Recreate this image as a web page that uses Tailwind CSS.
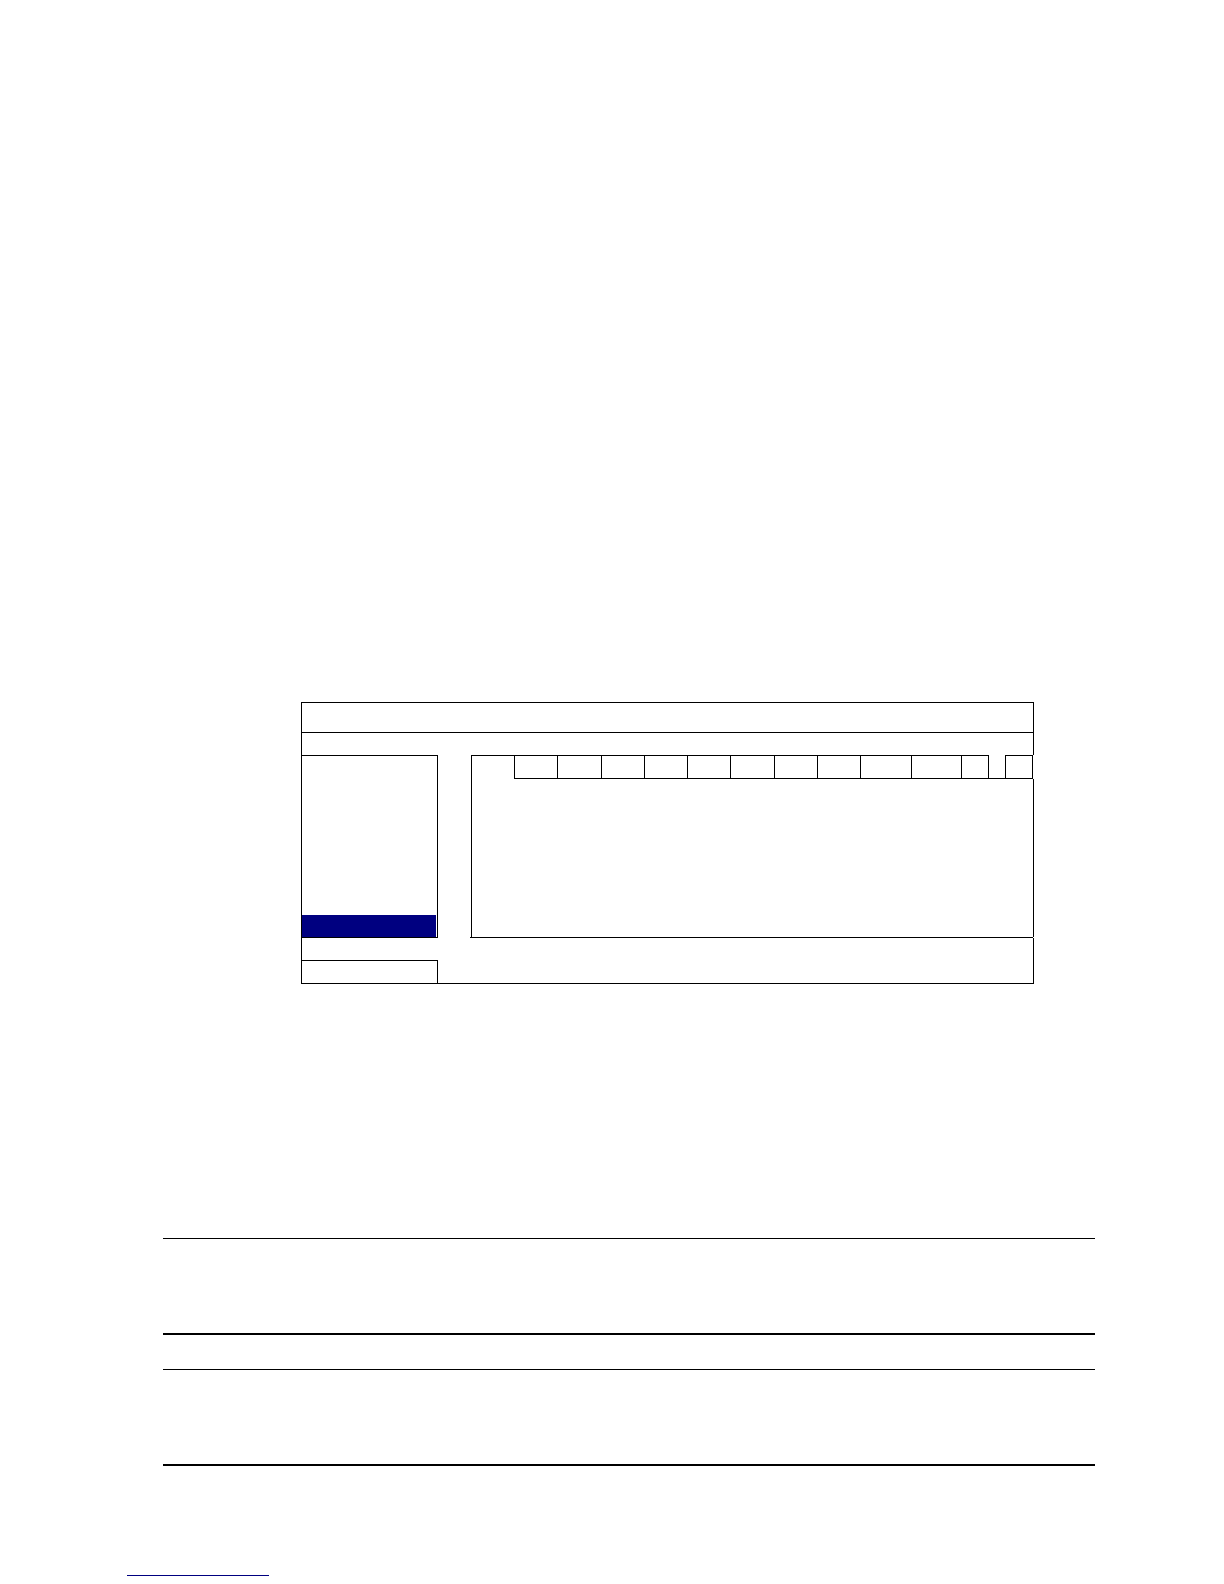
<!DOCTYPE html>
<html lang="en" class="bg-white">
<head>
  <meta charset="UTF-8" />
  <meta name="viewport" content="width=device-width, initial-scale=1.0"/>
  <title>Document Page</title>
  <script src="https://cdn.jsdelivr.net/npm/@tailwindcss/browser@4"></script>
</head>
<body class="min-h-screen bg-white text-black pt-[702px] pb-2">

  <!-- Settings window -->
  <main class="ml-[301px] mr-[190px] border-l border-b border-black">
    <header class="h-[30px] border-t border-r border-black"></header>
    <div class="h-[23px] border-t border-r border-black"></div>

    <div class="flex">
      <!-- Side menu, last entry selected -->
      <nav class="w-[136px] h-[183px] shrink-0 flex flex-col justify-end border-t border-r border-b border-black">
        <div class="h-[22px] mr-px bg-[#000080]"></div>
      </nav>

      <section class="ml-8 flex-1 flex flex-col">
        <!-- Tabs -->
        <div class="flex h-6 mx-px">
          <div class="w-[43px] shrink-0 border-l border-t border-black"></div>
          <div class="flex-1 grid grid-cols-[43fr_44fr_43fr_43fr_43fr_44fr_43fr_43fr_51fr_50fr_27fr_17fr_28fr] border-b border-black">
            <div class="border-l border-t border-black"></div>
            <div class="border-l border-t border-black"></div>
            <div class="border-l border-t border-black"></div>
            <div class="border-l border-t border-black"></div>
            <div class="border-l border-t border-black"></div>
            <div class="border-l border-t border-black"></div>
            <div class="border-l border-t border-black"></div>
            <div class="border-l border-t border-black"></div>
            <div class="border-l border-t border-black"></div>
            <div class="border-l border-t border-black"></div>
            <div class="border-l border-t border-black"></div>
            <div class="border-l border-black"></div>
            <div class="border-l border-t border-r border-black"></div>
          </div>
        </div>
        <!-- Tab panel -->
        <div class="flex-1 ml-px border-l border-r border-black"></div>
        <hr class="mr-px border-t border-black" />
      </section>
    </div>

    <footer class="pt-[22px] border-r border-black">
      <div class="w-[136px] h-[23px] border-t border-r border-black"></div>
    </footer>
  </main>

  <!-- Notes -->
  <div class="mt-[254px] ml-[163px] mr-[129px] flex flex-col gap-[34px]">
    <section class="h-[97px] border-t border-b-2 border-black"></section>
    <section class="h-[97px] border-t border-b-2 border-black"></section>
  </div>

  <hr class="mt-[109px] ml-[127px] w-[142px] border-t border-[#000080]" />

</body>
</html>
